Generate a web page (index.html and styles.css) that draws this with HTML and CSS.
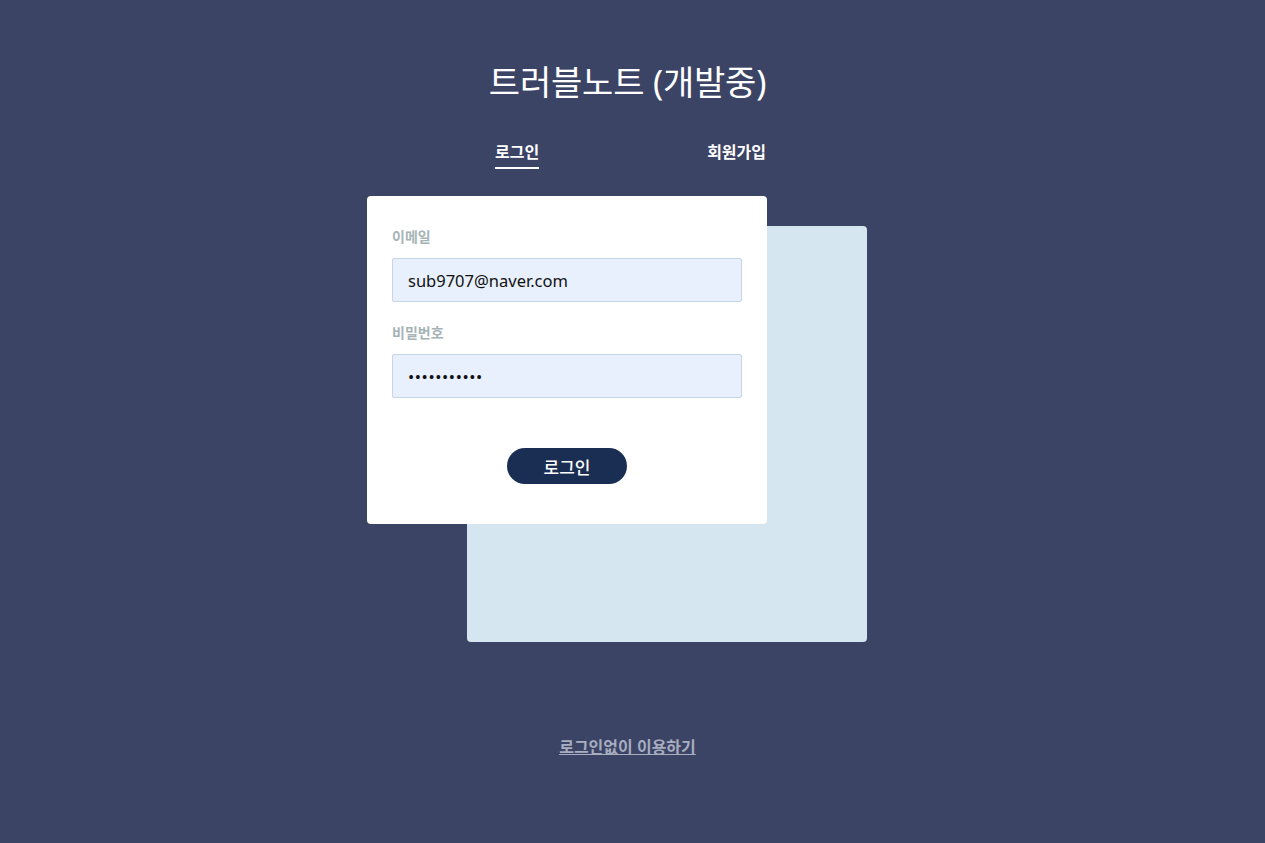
FILE: index.html
```html
<!DOCTYPE html>
<html lang="ko">
<head>
<meta charset="utf-8">
<title>트러블노트</title>
<link rel="stylesheet" href="styles.css">
</head>
<body>
<div class="page">
  <h1 class="title">트러블노트 (개발중)</h1>
  <div class="tabs">
    <span class="tab active">로그인</span>
    <span class="tab">회원가입</span>
  </div>
  <div class="stage">
    <div class="back-card"></div>
    <form class="card">
      <label class="label" for="email">이메일</label>
      <input class="input" id="email" type="text" value="sub9707@naver.com">
      <label class="label" for="pw">비밀번호</label>
      <input class="input pw" id="pw" type="password" value="12345678901">
      <div class="actions"><button type="button" class="btn">로그인</button></div>
    </form>
  </div>
  <a class="guest" href="#">로그인없이 이용하기</a>
</div>
</body>
</html>
```
FILE: styles.css
```css
* { box-sizing: border-box; }
html, body { margin: 0; padding: 0; }
body {
  background: #3b4465;
  font-family: "Noto Sans", "Noto Sans CJK KR", sans-serif;
  color: #fff;
  min-height: 843px;
}
.page {
  display: flex;
  flex-direction: column;
  align-items: center;
  padding-top: 58px;
  padding-right: 10px;
}
.title {
  margin: 0;
  font-size: 34px;
  font-weight: 400;
  line-height: 48px;
  letter-spacing: -0.2px;
}
.tabs {
  display: flex;
  gap: 168px;
  margin-top: 35px;
  padding-left: 6px;
}
.tab {
  font-size: 16px;
  font-weight: 700;
  line-height: 22px;
  padding-bottom: 4px;
  border-bottom: 2px solid transparent;
}
.tab.active { border-bottom-color: #fff; }
.stage {
  display: grid;
  margin-top: 27px;
  margin-right: 21px;
  width: 500px;
}
.back-card, .card { grid-area: 1 / 1; }
.back-card {
  margin-left: 100px;
  margin-top: 30px;
  width: 400px;
  height: 416px;
  background: #d6e6f0;
  border-radius: 4px;
}
.card {
  width: 400px;
  height: 328px;
  background: #fff;
  border-radius: 4px;
  padding: 31px 25px 0;
  display: flex;
  flex-direction: column;
  z-index: 1;
}
.label {
  font-size: 14px;
  font-weight: 700;
  color: #a6b3b6;
  line-height: 20px;
  margin-bottom: 11px;
}
.input {
  display: block;
  width: 350px;
  height: 44px;
  background: #e8f0fe;
  border: 1px solid #c6d4e6;
  border-radius: 2px;
  padding: 0 15px;
  font-family: "Noto Sans", "Noto Sans CJK KR", sans-serif;
  font-size: 16.5px;
  color: #111;
  margin: 0 0 21px;
  outline: none;
}
.input.pw { letter-spacing: 0.6px; }
.actions {
  display: flex;
  justify-content: center;
  margin-top: 29px;
}
.btn {
  width: 120px;
  height: 36px;
  border: 0;
  border-radius: 18px;
  background: #1a2d52;
  color: #fff;
  font-family: "Noto Sans CJK KR", sans-serif;
  font-size: 17px;
  font-weight: 500;
  padding: 0;
}
.guest {
  margin-top: 94px;
  font-size: 16px;
  font-weight: 700;
  color: #a8adc0;
  text-decoration: underline;
  line-height: 22px;
}
```
